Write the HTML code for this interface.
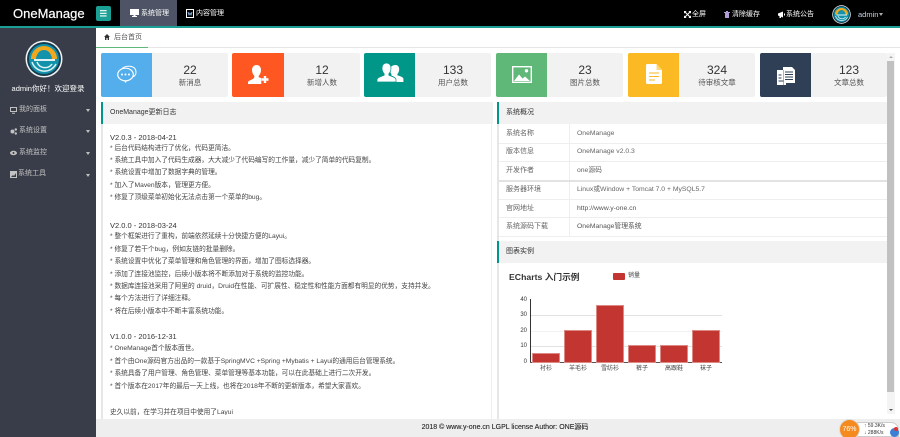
<!DOCTYPE html>
<html lang="zh">
<head>
<meta charset="utf-8">
<title>OneManage</title>
<style>
html,body{margin:0;padding:0}
body{width:900px;height:437px;overflow:hidden;background:#fff;position:relative;font-family:"Liberation Sans","Noto Sans CJK SC",sans-serif;color:#555}
div,span{position:absolute;white-space:nowrap}
svg{position:absolute;overflow:visible}
#w{left:0;top:0;width:900px;height:437px;overflow:hidden;filter:blur(.35px)}
.top{font-size:7px;color:#fff;line-height:10px;top:10px}
.side{font-size:7px;color:#c2c2c2;line-height:10px;left:19px}
.arrow{left:86px;width:0;height:0;border:2.7px solid transparent;border-top:3px solid #c2c2c2}
.card{top:53px;width:127px;height:44px;background:#f2f2f2;border-radius:2px;overflow:hidden}
.ico{left:0;top:0;width:51px;height:44px}
.num{left:51px;width:76px;text-align:center;top:10px;font-size:12px;line-height:14px;color:#333}
.lab{left:51px;width:76px;text-align:center;top:24px;font-size:7.5px;line-height:11px;color:#555}
.ph{top:102px;height:22px;background:#f2f2f2;border-left:2px solid #009688;box-sizing:border-box;font-size:7px;line-height:22px;padding-left:7px;color:#333}
.l{left:110px;font-size:6.7px;line-height:10px;color:#444}
.v{left:110px;font-size:7.5px;line-height:10px;color:#333}
.rowk{left:506px;font-size:7px;line-height:10px;color:#666}
.rowv{left:577px;font-size:6.8px;line-height:10px;color:#666}
.rl{left:499px;width:388px;height:1px;background:#eee}
.xl{font-size:6px;line-height:8px;color:#444;top:365px;width:32px;text-align:center}
.yl{font-size:6px;line-height:8px;color:#333;left:515px;width:12px;text-align:right}
.grid{left:530px;width:192px;height:1px;background:#e2e2e2}
.bar{width:26px;background:#c23531;outline:0.5px solid #dd8a87}
</style>
</head>
<body>
<div id="w">
<!-- top bar -->
<div style="left:0;top:0;width:900px;height:26px;background:#000"></div>
<div style="left:0;top:26px;width:900px;height:2px;background:#1aa094"></div>
<div style="left:13px;top:6px;font-size:13px;line-height:16px;color:#fff;-webkit-text-stroke:.2px #fff">OneManage</div>
<div style="left:96px;top:6px;width:15px;height:15px;background:#1aa094;border-radius:2px"></div>
<svg style="left:100px;top:10px" width="7" height="7"><path d="M0 .7h6.6M0 3.3h6.6M0 5.9h6.6" stroke="#fff" stroke-width="1.1"/></svg>
<div style="left:120px;top:0;width:57px;height:26px;background:#4e5465"></div>
<svg style="left:130px;top:9px" width="9" height="8"><path d="M0 0h9v6H5.5v1H7v1H2V7h1.500V6H0z" fill="#fff"/></svg>
<div class="top" style="left:141px;top:9px">系统管理</div>
<svg style="left:186px;top:9px" width="8" height="9"><rect x=".5" y=".5" width="7" height="8" fill="none" stroke="#fff"/><path d="M2 3l1 3 1-2 1 2 1-3" stroke="#9cf" fill="none" stroke-width=".8"/></svg>
<div class="top" style="left:196px;top:9px">内容管理</div>

<svg style="left:684px;top:11px" width="7" height="7"><path d="M0 0h2.600L0 2.600zM7 0v2.600L4.400 0zM0 7V4.400L2.600 7zM7 7H4.400L7 4.400z" fill="#fff"/><path d="M1 1l5 5M6 1L1 6" stroke="#fff" stroke-width="1"/></svg>
<div class="top" style="left:692px">全屏</div>
<svg style="left:724px;top:11px" width="6" height="7"><path d="M1 2h4v5H1zM0 1h6v1H0zM2 0h2v1H2z" fill="#b29bd6"/></svg>
<div class="top" style="left:732px">清除缓存</div>
<svg style="left:778px;top:11px" width="7" height="7"><path d="M0 2.500L5 .5v6L0 4.500zM1.500 5h1.500v2h-1.500zM6 2.500h1v2H6z" fill="#fff"/></svg>
<div class="top" style="left:786px">系统公告</div>
<svg style="left:832px;top:5px" width="19" height="19" viewBox="0 0 38 38"><use href="#logo"/></svg>
<div class="top" style="left:858px;color:#c9d6e6;font-size:7.5px">admin</div>
<div style="left:879px;top:13px;width:0;height:0;border:2.700px solid transparent;border-top:3px solid #aaa"></div>

<!-- sidebar -->
<div style="left:0;top:28px;width:96px;height:409px;background:#393d49"></div>
<svg style="left:25px;top:40px" width="38" height="38" viewBox="0 0 38 38">
<defs><g id="logo">
<circle cx="19" cy="19" r="18.500" fill="#f2f4f4"/>
<circle cx="19" cy="19" r="17" fill="#173f52"/>
<circle cx="19" cy="19" r="15" fill="#1292ab"/>
<path d="M6 19a13 13 0 0 1 26 0h-5a8 8 0 0 0-16 0z" fill="#f2a81d"/>
<path d="M9 20h21" stroke="#fff" stroke-width="1.800"/>
<path d="M31 24a13 13 0 0 1-24-2M27 24a8.500 8.500 0 0 1-15-2" fill="none" stroke="#dff2f4" stroke-width="1.500"/>
<path d="M12 17a7 7 0 0 1 14 0z" fill="#1292ab"/>
</g></defs><use href="#logo"/></svg>
<div style="left:0;width:96px;top:84px;text-align:center;font-size:7.500px;line-height:10px;color:#fff">admin你好！欢迎登录</div>

<svg style="left:10px;top:107px" width="7" height="7"><path d="M.5.500h6v4h-6zM2 6.300h3" fill="none" stroke="#c2c2c2"/></svg>
<div class="side" style="top:105px">我的面板</div><div class="arrow" style="top:109px"></div>
<svg style="left:10px;top:128px" width="7" height="7"><circle cx="2.500" cy="3.500" r="2" fill="#c2c2c2"/><circle cx="5.800" cy="1.500" r="1.200" fill="#c2c2c2"/><circle cx="5.800" cy="5.500" r="1.200" fill="#c2c2c2"/></svg>
<div class="side" style="top:126px">系统设置</div><div class="arrow" style="top:130px"></div>
<svg style="left:10px;top:150px" width="7" height="6"><ellipse cx="3.500" cy="3" rx="3.500" ry="2.200" fill="#c2c2c2"/><circle cx="3.500" cy="3" r="1" fill="#393d49"/></svg>
<div class="side" style="top:148px">系统监控</div><div class="arrow" style="top:152px"></div>
<svg style="left:10px;top:171px" width="7" height="7"><path d="M0 0h7v7H0z" fill="#c2c2c2"/><path d="M1 6l2-2 1 1 2-3v4z" fill="#393d49"/></svg>
<div class="side" style="left:18px;top:169px">系统工具</div><div class="arrow" style="top:174px"></div>

<!-- breadcrumb -->
<div style="left:96px;top:47px;width:804px;height:1px;background:#e6e6e6"></div>
<div style="left:96px;top:47px;width:52px;height:1px;background:#5fb878"></div>
<svg style="left:104px;top:34px" width="6" height="6"><path d="M3 0l3 3H5v3H3.600V4H2.400v2H1V3H0z" fill="#333"/></svg>
<div style="left:114px;top:33px;font-size:7px;line-height:10px;color:#555">后台首页</div>

<!-- cards -->
<div class="card" style="left:101px"><div class="ico" style="background:#53aeeb"></div><div class="num">22</div><div class="lab">新消息</div>
<svg style="left:16px;top:12px" width="20" height="21"><path d="M5 3.500Q8 .8 13 1.300q6 .7 6 6 0 3-2.600 4.500" fill="none" stroke="#fff" stroke-width="1"/><ellipse cx="8.500" cy="9.500" rx="7.800" ry="6.300" fill="#53aeeb" stroke="#fff" stroke-width="1.200"/><path d="M6.800 15.500l1.700 2.500 1.700-2.500" fill="#fff"/><circle cx="5" cy="9.500" r="1" fill="#fff"/><circle cx="8.500" cy="9.500" r="1" fill="#fff"/><circle cx="12" cy="9.500" r="1" fill="#fff"/></svg></div>

<div class="card" style="left:232px;width:128px"><div class="ico" style="background:#ff5722;width:52px"></div><div class="num" style="left:52px">12</div><div class="lab" style="left:52px">新增人数</div>
<svg style="left:16px;top:12px" width="21" height="20"><path d="M8.500 0c3 0 4.500 2.300 4.500 5 0 2.500-1 4.500-2.300 5.800v1.400c1 .4 1.900.7 2.600 1.100V19H0v-1.800c0-2 6.300-2.800 6.300-5V10.800C5 9.500 4 7.500 4 5c0-2.700 1.500-5 4.500-5z" fill="#fff"/><path d="M13.500 14.500h7M17 11v7" stroke="#fff" stroke-width="2.400"/></svg></div>

<div class="card" style="left:364px"><div class="ico" style="background:#009688"></div><div class="num">133</div><div class="lab">用户总数</div>
<svg style="left:13px;top:10px" width="27" height="20"><path d="M18.500 2c2.500 0 3.700 2 3.700 4.200 0 2-.8 3.700-1.800 4.800v1.300c2 .9 6 1.600 6 3.600V19h-7.400v-2.500c0-2-3-3.200-4.600-4V11c-.8-1-1.500-2.800-1.500-4.800C12.900 4 15.500 2 18.500 2z" fill="#fff"/><path d="M9.500 0C12.500 0 14 2.300 14 5c0 2.500-1 4.500-2.200 5.800v1.400c2.400 1.100 7.200 1.900 7.200 4.500V19H0v-2.300c0-2.600 4.800-3.400 7.200-4.500v-1.400C6 9.500 5 7.500 5 5c0-2.700 1.500-5 4.500-5z" fill="#fff" stroke="#009688" stroke-width=".7"/></svg></div>

<div class="card" style="left:496px"><div class="ico" style="background:#5fb878"></div><div class="num">23</div><div class="lab">图片总数</div>
<svg style="left:16px;top:13px" width="20" height="17"><rect x=".7" y=".7" width="18.600" height="15.600" fill="none" stroke="#fff" stroke-width="1.400"/><circle cx="14.500" cy="4.800" r="1.700" fill="#fff"/><path d="M2 15l5-6.500 3.500 4 2.500-2 5 4.500z" fill="#fff"/></svg></div>

<div class="card" style="left:628px"><div class="ico" style="background:#fbb923"></div><div class="num">324</div><div class="lab">待审核文章</div>
<svg style="left:18px;top:11px" width="16" height="20"><path d="M1.500 0H10.500l5.500 6v12.500q0 1.500-1.500 1.500h-13Q0 20 0 18.500v-17Q0 0 1.500 0z" fill="#fff"/><path d="M10.500 0v6h5.500z" fill="#fbd777"/><path d="M3 9h10M3 12.500h10M3 16h6" stroke="#fbb923" stroke-width="1.100"/></svg></div>

<div class="card" style="left:760px"><div class="ico" style="background:#2f4056"></div><div class="num">123</div><div class="lab">文章总数</div>
<svg style="left:17px;top:14px" width="18" height="18"><path d="M6 0h9l3 3v13H6z" fill="#fff"/><path d="M0 3h9v15H0z" fill="#fff"/><path d="M8 5h8M8 7.500h8M8 10h8M8 12.500h8" stroke="#2f4056" stroke-width=".9"/><path d="M1.500 8h3M1.500 11h3M1.500 14h5" stroke="#2f4056" stroke-width=".9"/><path d="M6 3h1v15H6z" fill="#2f4056" opacity=".4"/></svg></div>

<!-- left panel -->
<div style="left:101px;top:102px;width:2px;height:317px;background:#e6e6e6"></div>
<div style="left:491px;top:124px;width:1px;height:295px;background:#eee"></div>
<div class="ph" style="left:101px;width:392px">OneManage更新日志</div>
<div class="v" style="top:133px">V2.0.3 - 2018-04-21</div>
<div class="l" style="top:144px">* 后台代码结构进行了优化，代码更简洁。</div>
<div class="l" style="top:156px">* 系统工具中加入了代码生成器，大大减少了代码编写的工作量，减少了简单的代码复制。</div>
<div class="l" style="top:168px">* 系统设置中增加了数据字典的管理。</div>
<div class="l" style="top:181px">* 加入了Maven版本，管理更方便。</div>
<div class="l" style="top:193px">* 修复了顶级菜单初始化无法点击第一个菜单的bug。</div>
<div class="v" style="top:221px">V2.0.0 - 2018-03-24</div>
<div class="l" style="top:232px">* 整个框架进行了重构，前端依然延续十分快捷方便的Layui。</div>
<div class="l" style="top:245px">* 修复了若干个bug，例如友链的批量删除。</div>
<div class="l" style="top:257px">* 系统设置中优化了菜单管理和角色管理的界面，增加了图标选择器。</div>
<div class="l" style="top:270px">* 添加了连接池监控，后续小版本将不断添加对于系统的监控功能。</div>
<div class="l" style="top:282px">* 数据库连接池采用了阿里的 druid，Druid在性能、可扩展性、稳定性和性能方面都有明显的优势，支持并发。</div>
<div class="l" style="top:294px">* 每个方法进行了详细注释。</div>
<div class="l" style="top:307px">* 将在后续小版本中不断丰富系统功能。</div>
<div class="v" style="top:332px">V1.0.0 - 2016-12-31</div>
<div class="l" style="top:344px">* OneManage首个版本面世。</div>
<div class="l" style="top:357px">* 首个由One源码官方出品的一款基于SpringMVC +Spring +Mybatis + Layui的通用后台管理系统。</div>
<div class="l" style="top:369px">* 系统具备了用户管理、角色管理、菜单管理等基本功能，可以在此基础上进行二次开发。</div>
<div class="l" style="top:382px">* 首个版本在2017年的最后一天上线，也将在2018年不断的更新版本，希望大家喜欢。</div>
<div style="left:110px;top:408px;height:7px;overflow:hidden;font-size:6.7px;line-height:10px;color:#444">史久以前，在学习并在项目中使用了Layui</div>

<!-- right panel -->
<div style="left:497px;top:102px;width:2px;height:317px;background:#e6e6e6"></div>
<div class="ph" style="left:497px;width:390px">系统概况</div>
<div style="left:569px;top:124px;width:1px;height:112px;background:#eee"></div>
<div class="rl" style="top:143px"></div><div class="rl" style="top:161px"></div><div class="rl" style="top:180px;height:1.500px;background:#e2e2e2"></div><div class="rl" style="top:199px"></div><div class="rl" style="top:217px"></div><div class="rl" style="top:236px"></div>
<div class="rowk" style="top:129px">系统名称</div><div class="rowv" style="top:129px">OneManage</div>
<div class="rowk" style="top:147px">版本信息</div><div class="rowv" style="top:147px">OneManage v2.0.3</div>
<div class="rowk" style="top:166px">开发作者</div><div class="rowv" style="top:166px">one源码</div>
<div class="rowk" style="top:185px">服务器环境</div><div class="rowv" style="top:185px">Linux或Window + Tomcat 7.0 + MySQL5.7</div>
<div class="rowk" style="top:204px">官网地址</div><div class="rowv" style="top:204px;color:#555">http://www.y-one.cn</div>
<div class="rowk" style="top:222px">系统源码下载</div><div class="rowv" style="top:222px;color:#555">OneManage管理系统</div>
<div class="ph" style="left:497px;width:390px;top:241px">图表实例</div>

<!-- chart -->
<div style="left:509px;top:272px;font-size:8.7px;line-height:11px;font-weight:bold;color:#333">ECharts 入门示例</div>
<div style="left:613px;top:273px;width:12px;height:7px;background:#c23531;border-radius:1px"></div>
<div style="left:628px;top:272px;font-size:6px;line-height:8px;color:#444">销量</div>
<div class="grid" style="top:315px"></div><div class="grid" style="top:331px;background:#f2f2f2"></div><div class="grid" style="top:346px"></div>
<div style="left:530px;top:299px;width:1px;height:64px;background:#333"></div>
<div style="left:530px;top:362px;width:192px;height:1px;background:#555"></div>
<div class="bar" style="left:533px;top:354px;height:8px"></div>
<div class="bar" style="left:565px;top:331px;height:31px"></div>
<div class="bar" style="left:597px;top:306px;height:56px"></div>
<div class="bar" style="left:629px;top:346px;height:16px"></div>
<div class="bar" style="left:661px;top:346px;height:16px"></div>
<div class="bar" style="left:693px;top:331px;height:31px"></div>
<div class="yl" style="top:296px">40</div><div class="yl" style="top:311px">30</div><div class="yl" style="top:327px">20</div><div class="yl" style="top:342px">10</div><div class="yl" style="top:358px">0</div>
<div class="xl" style="left:530px">衬衫</div><div class="xl" style="left:562px">羊毛衫</div><div class="xl" style="left:594px">雪纺衫</div><div class="xl" style="left:626px">裤子</div><div class="xl" style="left:658px">高跟鞋</div><div class="xl" style="left:690px">袜子</div>

<!-- scrollbar -->
<div style="left:887px;top:53px;width:8px;height:361px;background:#f4f4f4"></div>
<div style="left:887px;top:61px;width:7px;height:331px;background:#c1c1c1"></div>
<div style="left:889px;top:56px;width:0;height:0;border:2px solid transparent;border-bottom:2px solid #aaa;border-top:0"></div>
<div style="left:889px;top:409px;width:0;height:0;border:2px solid transparent;border-top:2px solid #555;border-bottom:0"></div>

<!-- footer -->
<div style="left:96px;top:419px;width:804px;height:18px;background:#eee"></div>
<div style="left:96px;top:423px;width:818px;text-align:center;font-size:7px;line-height:10px;color:#222;-webkit-text-stroke:.1px #222">2018 © www.y-one.cn LGPL license Author: ONE源码</div>

<!-- widget -->
<div style="left:848px;top:422px;width:51px;height:15px;background:#fff;border:1px solid #ccc;border-radius:8px 8px 0 0;box-sizing:border-box"></div>
<div style="left:864px;top:423px;font-size:5px;line-height:6px;color:#333">↑ 59.3K/s</div>
<div style="left:864px;top:430px;font-size:5px;line-height:6px;color:#333">↓ 288K/s</div>
<div style="left:890px;top:428px;width:9px;height:9px;background:#3b7fd6;border-radius:50%"></div>
<div style="left:894px;top:427px;width:4px;height:4px;background:#d33;border-radius:50%"></div>
<div style="left:839px;top:419px;width:21px;height:21px;background:#f58a1f;border:1px solid #ddd;border-radius:50%;box-sizing:border-box;text-align:center;color:#fff;font-size:7px;line-height:19px">76%</div>
</div>
</body>
</html>
